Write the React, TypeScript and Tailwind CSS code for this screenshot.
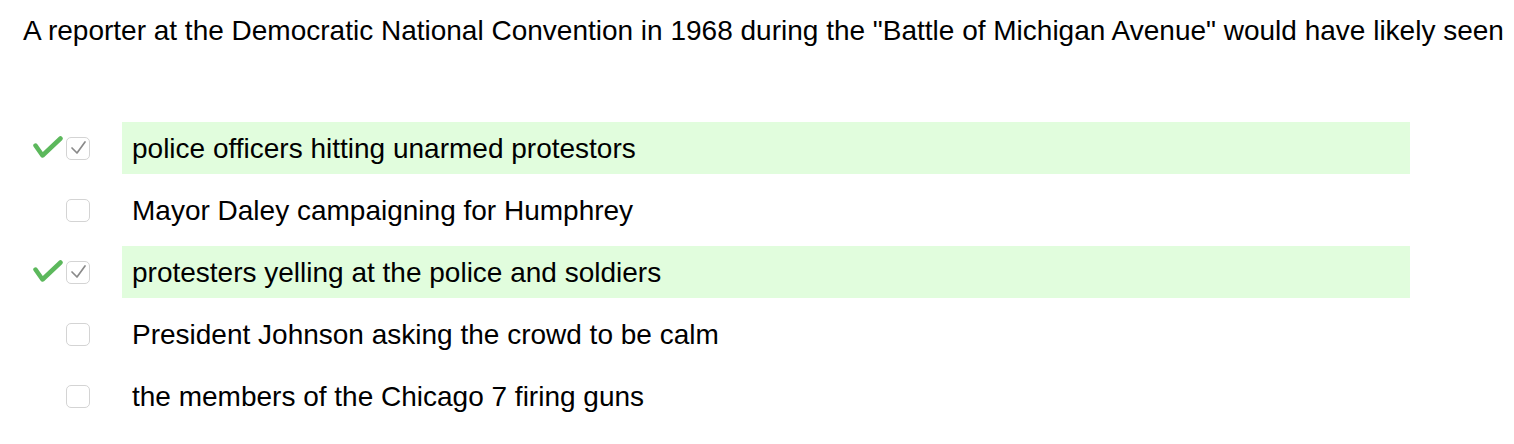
const options = [
  { text: "police officers hitting unarmed protestors", correct: true },
  { text: "Mayor Daley campaigning for Humphrey", correct: false },
  { text: "protesters yelling at the police and soldiers", correct: true },
  { text: "President Johnson asking the crowd to be calm", correct: false },
  { text: "the members of the Chicago 7 firing guns", correct: false },
];

function GreenCheck() {
  return (
    <svg width="30" height="24" viewBox="0 0 30 24" fill="none">
      <path d="M2.5 9.5 L9.5 19.5 L27.5 2.5" stroke="#5cb85c" strokeWidth="4.5" strokeLinecap="round" strokeLinejoin="round" />
    </svg>
  );
}

export default function App() {
  return (
    <div className="w-[1514px] h-[444px] bg-white text-black font-['Liberation_Sans',Arial,sans-serif]">
      <h1 className="pl-[23px] pt-[13px] text-[28px] leading-[36px] whitespace-nowrap">
        A reporter at the Democratic National Convention in 1968 during the "Battle of Michigan Avenue" would have likely seen
      </h1>
      <div className="mt-[73px] flex flex-col gap-[10px]">
        {options.map((o) => (
          <div key={o.text} className="flex items-center h-[52px]">
            <div className="w-[33px] shrink-0" />
            <div className="w-[30px] shrink-0 flex items-center">{o.correct && <GreenCheck />}</div>
            <div className="w-[24px] h-[23px] shrink-0 ml-[3px] rounded-[5px] border border-[#d4d4d4] flex items-center justify-center">
              {o.correct && (
                <svg width="22" height="21" viewBox="0 0 22 21" fill="none">
                  <path d="M5 10 L10 15 L18 4" stroke="#8a8a8a" strokeWidth="1.7" strokeLinecap="round" strokeLinejoin="round" />
                </svg>
              )}
            </div>
            <div className="w-[32px] shrink-0" />
            <div className={`w-[1288px] h-[52px] flex items-center pl-[10px] pt-[2px] text-[28px] ${o.correct ? "bg-[#e1fddd]" : ""}`}>
              {o.text}
            </div>
          </div>
        ))}
      </div>
    </div>
  );
}
